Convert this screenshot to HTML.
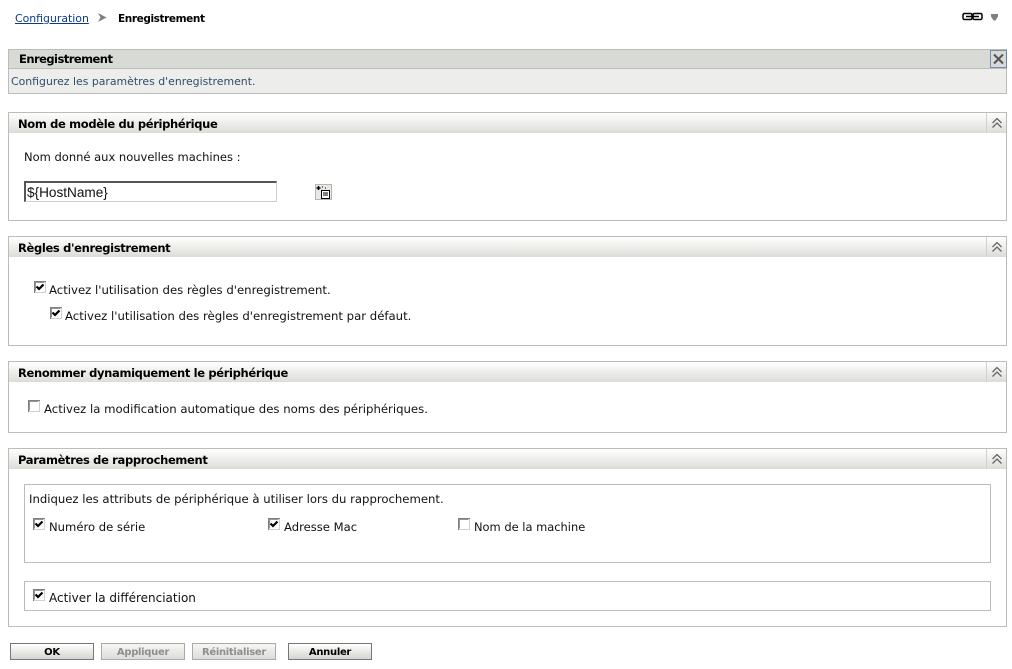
<!DOCTYPE html>
<html><head><meta charset="utf-8"><style>
html,body{margin:0;padding:0;background:#fff;width:1012px;height:669px;overflow:hidden}
body{position:relative;font-family:"DejaVu Sans","Liberation Sans",sans-serif;font-size:12px;color:#111}
.a{position:absolute;white-space:nowrap}
.t{position:absolute;white-space:nowrap;line-height:14px;height:14px}
.box{position:absolute;box-sizing:border-box;border:1px solid #bcbcb8;background:#fff}
.hd{position:absolute;left:0;right:0;top:0;height:20px;background:linear-gradient(#fff,#dcdcd8)}
.hd .sep{position:absolute;right:19px;top:0;bottom:0;width:1px;background:#d0d0cc}
.h{position:absolute;font-weight:bold;white-space:nowrap;line-height:14px;color:#000;left:9px;top:4px;font-size:11.5px;letter-spacing:-.34px}
.cb{position:absolute;width:13px;height:13px}
.btn{position:absolute;box-sizing:border-box;top:643px;width:84px;height:17px;border:1px solid #777;background:linear-gradient(#fff,#d4d4d0);text-align:center;font-weight:bold;font-size:10px;letter-spacing:-.3px;line-height:17px;color:#000}
.btn.d{border-color:#aaa;color:#8e8e8e;background:linear-gradient(#f6f6f4,#dcdcd8)}
svg{display:block}
</style></head><body>

<a class="t" style="left:15px;top:12px;color:#0b3a8c;text-decoration:underline;font-size:10.9px">Configuration</a>
<svg class="a" style="left:98px;top:13px" width="9" height="10"><path d="M0 0 L8.5 4.5 L0 9 L2.5 4.5Z" fill="#808080"/></svg>
<div class="t" style="left:118px;top:12px;font-weight:bold;font-size:10.5px;letter-spacing:-.4px;color:#000">Enregistrement</div>

<svg class="a" style="left:962px;top:12px" width="22" height="10" fill="none" stroke="#000" stroke-width="1.5"><rect x="1" y="1.5" width="9" height="6" rx="1.5"/><rect x="11" y="1.5" width="9" height="6" rx="1.5"/><path d="M4 4.5H17"/></svg>
<svg class="a" style="left:990px;top:12px" width="9" height="10"><path d="M1 2H8V4.5L5.5 8.5H3.5L1 4.5Z" fill="#808080"/></svg>

<div class="box" style="left:8px;top:49px;width:999px;height:45px;background:#ededeb">
 <div class="a" style="left:0;right:0;top:0;height:18px;background:#d8dad6;border-bottom:1px solid #bcbcb8"></div>
 <div class="h" style="left:10px;top:2px;letter-spacing:-.54px">Enregistrement</div>
 <div class="t" style="left:2px;top:25px;color:#2f4f6b;font-size:10.9px">Configurez les paramètres d'enregistrement.</div>
 <svg class="a" style="left:981px;top:0" width="17" height="18"><rect x="0.5" y="0.5" width="16" height="17" fill="none" stroke="#1b3f8f" stroke-dasharray="1 1"/><path d="M4 4.5L13 13.5M13 4.5L4 13.5" stroke="#555" stroke-width="2"/></svg>
</div>

<div class="box" style="left:8px;top:112px;width:999px;height:109px">
 <div class="hd"><div class="sep"></div></div>
 <div class="h">Nom de modèle du périphérique</div>
 <svg class="a" style="left:982px;top:4px" width="12" height="12" fill="none" stroke="#666" stroke-width="1.3"><path d="M1.5 6L6 1.5L10.5 6M1.5 10.5L6 6L10.5 10.5"/></svg>
 <div class="t" style="left:15px;top:37px;font-size:11.5px">Nom donné aux nouvelles machines :</div>
 <div class="a" style="left:15px;top:68px;width:253px;height:21px;box-sizing:border-box;border:1px solid #d0cfc8;border-top:2px solid #555;border-left:2px solid #555;font-family:'Liberation Sans',sans-serif;font-size:13.6px;line-height:20px;padding-left:1px;color:#111">${HostName}</div>
 <svg class="a" style="left:306px;top:71px" width="17" height="16"><rect x="0.5" y="0.5" width="16" height="15" fill="#e8e8e4" stroke="#b4b4b0"/><path d="M1.5 4H5.5M3.5 2V6" stroke="#000" stroke-width="1.5"/><path d="M7 3H8M10 4H11" stroke="#000"/><rect x="6.5" y="6.5" width="8" height="8" fill="#fff" stroke="#000"/><path d="M8 9H13M8 11H13" stroke="#000"/></svg>
</div>

<div class="box" style="left:8px;top:236px;width:999px;height:110px">
 <div class="hd"><div class="sep"></div></div>
 <div class="h">Règles d'enregistrement</div>
 <svg class="a" style="left:982px;top:4px" width="12" height="12" fill="none" stroke="#666" stroke-width="1.3"><path d="M1.5 6L6 1.5L10.5 6M1.5 10.5L6 6L10.5 10.5"/></svg>
</div>
<svg class="cb" style="left:34px;top:281px"><use href="#c"/></svg>
<div class="t" style="left:49px;top:283px;font-size:11.7px">Activez l'utilisation des règles d'enregistrement.</div>
<svg class="cb" style="left:50px;top:307px"><use href="#c"/></svg>
<div class="t" style="left:65px;top:309px;font-size:11.7px">Activez l'utilisation des règles d'enregistrement par défaut.</div>

<div class="box" style="left:8px;top:361px;width:999px;height:72px">
 <div class="hd"><div class="sep"></div></div>
 <div class="h">Renommer dynamiquement le périphérique</div>
 <svg class="a" style="left:982px;top:4px" width="12" height="12" fill="none" stroke="#666" stroke-width="1.3"><path d="M1.5 6L6 1.5L10.5 6M1.5 10.5L6 6L10.5 10.5"/></svg>
</div>
<svg class="cb" style="left:28px;top:400px"><use href="#u"/></svg>
<div class="t" style="left:44px;top:402px;font-size:11.7px">Activez la modification automatique des noms des périphériques.</div>

<div class="box" style="left:8px;top:448px;width:999px;height:179px">
 <div class="hd"><div class="sep"></div></div>
 <div class="h">Paramètres de rapprochement</div>
 <svg class="a" style="left:982px;top:4px" width="12" height="12" fill="none" stroke="#666" stroke-width="1.3"><path d="M1.5 6L6 1.5L10.5 6M1.5 10.5L6 6L10.5 10.5"/></svg>
</div>
<div class="box" style="left:24px;top:484px;width:967px;height:79px"></div>
<div class="t" style="left:29px;top:492px;font-size:11.66px">Indiquez les attributs de périphérique à utiliser lors du rapprochement.</div>
<svg class="cb" style="left:33px;top:518px"><use href="#c"/></svg>
<div class="t" style="left:49px;top:520px;font-size:11.6px">Numéro de série</div>
<svg class="cb" style="left:268px;top:518px"><use href="#c"/></svg>
<div class="t" style="left:284px;top:520px;font-size:11.6px">Adresse Mac</div>
<svg class="cb" style="left:458px;top:518px"><use href="#u"/></svg>
<div class="t" style="left:474px;top:520px;font-size:11.45px">Nom de la machine</div>
<div class="box" style="left:24px;top:581px;width:967px;height:30px"></div>
<svg class="cb" style="left:33px;top:589px"><use href="#c"/></svg>
<div class="t" style="left:49px;top:591px;font-size:12px">Activer la différenciation</div>

<div class="btn" style="left:10px">OK</div>
<div class="btn d" style="left:101px">Appliquer</div>
<div class="btn d" style="left:192px">Réinitialiser</div>
<div class="btn" style="left:288px">Annuler</div>

<svg width="0" height="0" style="position:absolute"><defs>
<g id="u"><rect x="0" y="0" width="12" height="12" fill="#d4d0c8"/><path d="M0.5 12V0.5H12" fill="none" stroke="#808080"/><rect x="1" y="1" width="10" height="10" fill="#fff"/><path d="M1.5 10.5V1.5H10.5" fill="none" stroke="#404040" stroke-opacity=".55"/></g>
<g id="c"><use href="#u"/><path d="M2.5 5.5L5 8L9.5 3.5" fill="none" stroke="#000" stroke-width="2.2"/></g>
</defs></svg>
</body></html>
